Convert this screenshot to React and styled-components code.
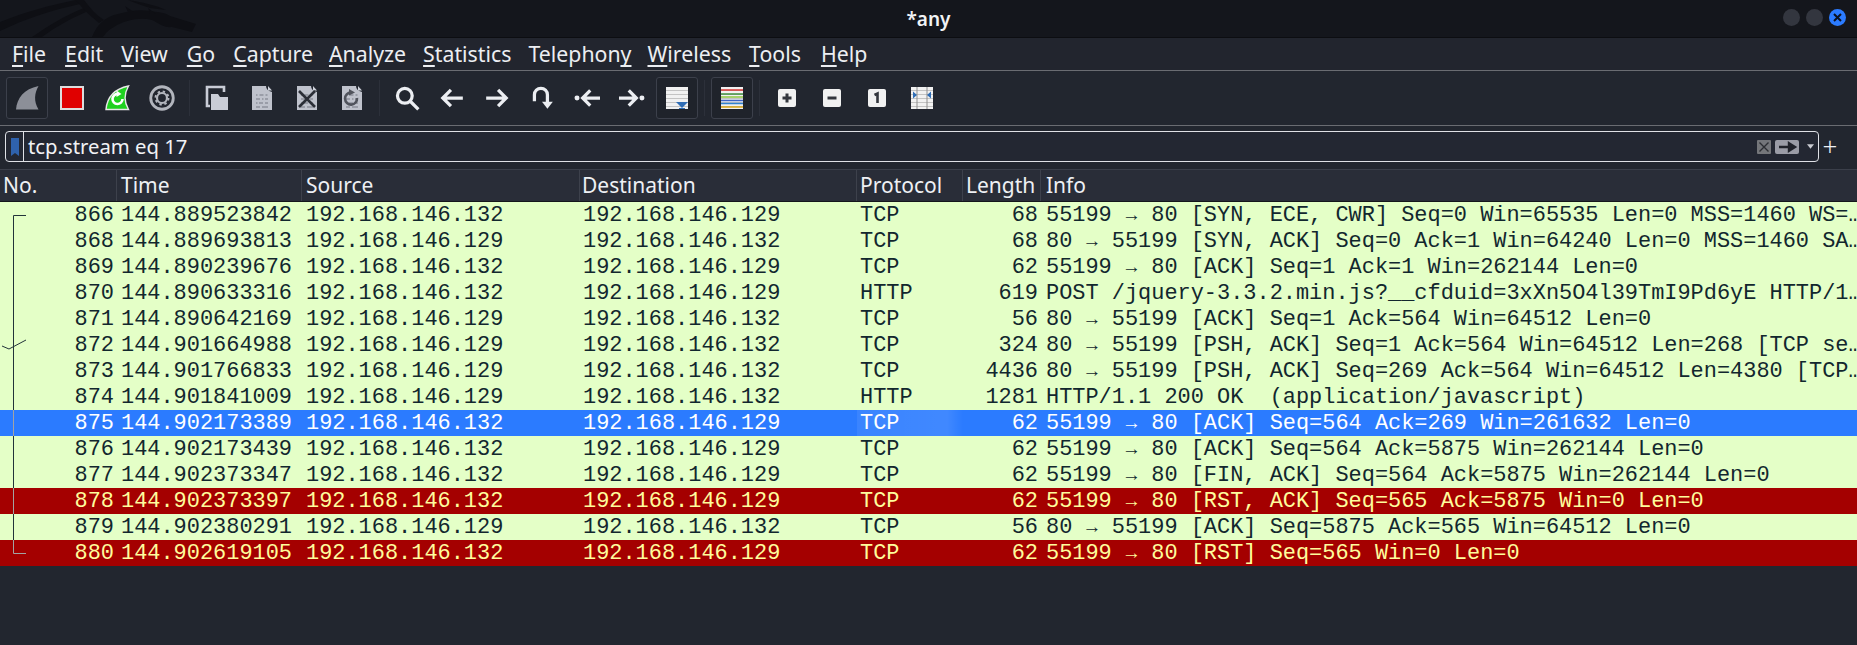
import React from "react";
import styled, { createGlobalStyle } from "styled-components";

const GlobalStyle = createGlobalStyle`
  html, body { margin: 0; padding: 0; background: #22262f; overflow: hidden; }
  #root { width: 1857px; height: 645px; }
`;

const COLUMNS = "117px 185px 278px 277px 106px 78px 1fr";
const UI_FONT = `"Noto Sans", "DejaVu Sans", sans-serif`;

const Window = styled.div`
  width: 1857px;
  height: 645px;
  display: flex;
  flex-direction: column;
  background: #22262f;
  color: #eef0f4;
  font-family: ${UI_FONT};
  overflow: hidden;
`;

const TitleBar = styled.header`
  position: relative;
  flex: 0 0 38px;
  box-sizing: border-box;
  height: 38px;
  display: flex;
  align-items: center;
  justify-content: center;
  background: #14161c;
  border-bottom: 1px solid #0c0d11;
`;

const Dragon = styled.svg`
  position: absolute;
  left: 0;
  top: 0;
  width: 220px;
  height: 37px;
`;

const Title = styled.div`
  font-size: 19px;
  font-weight: 600;
  color: #f2f3f5;
  line-height: 36px;
`;

const WindowButtons = styled.div`
  position: absolute;
  right: 11px;
  top: 9px;
  display: flex;
  gap: 6px;
`;

const WindowDot = styled.span`
  width: 17px;
  height: 17px;
  border-radius: 50%;
  background: ${(p) => (p.$close ? "#2b7bff" : "#33363f")};
  display: flex;
  align-items: center;
  justify-content: center;
`;

const MenuBar = styled.nav`
  flex: 0 0 33px;
  height: 33px;
  box-sizing: border-box;
  display: flex;
  align-items: center;
  padding-left: 12px;
  background: #22252e;
  border-bottom: 1px solid #6a6c72;
`;

const MenuItem = styled.span`
  font-size: 21.3px;
  line-height: 32px;
  color: #eceef2;
  margin-right: ${(p) => p.$gap}px;
  white-space: nowrap;
  & u {
    text-decoration-thickness: 2px;
    text-underline-offset: 3px;
    text-decoration-skip-ink: none;
  }
`;

const ToolBar = styled.div`
  flex: 0 0 55px;
  height: 55px;
  box-sizing: border-box;
  display: flex;
  align-items: center;
  gap: 3px;
  padding-left: 6px;
  background: #22262f;
  border-bottom: 1px solid #6a6c72;
`;

const ToolButton = styled.div`
  box-sizing: border-box;
  width: 42px;
  height: 42px;
  display: flex;
  align-items: center;
  justify-content: center;
  border-radius: 3px;
  border: 1px solid ${(p) => (p.$on ? "#3c404b" : "transparent")};
  background: ${(p) => (p.$on ? "#1f232b" : "transparent")};
`;

const ToolSep = styled.span`
  width: 1px;
  height: 36px;
  margin: 0 3px;
  background: #2c303a;
`;

const FilterRow = styled.div`
  flex: 0 0 43px;
  height: 43px;
  box-sizing: border-box;
  display: flex;
  align-items: flex-start;
  padding: 5px 0 0 5px;
  background: #22262f;
`;

const FilterField = styled.div`
  box-sizing: border-box;
  width: 1814px;
  height: 31px;
  display: flex;
  align-items: center;
  border: 1px solid #dfe1e6;
  border-radius: 4px;
  background: #232732;
`;

const BookmarkCell = styled.div`
  box-sizing: border-box;
  flex: 0 0 18px;
  height: 100%;
  display: flex;
  align-items: center;
  justify-content: center;
  border-right: 1px solid #dfe1e6;
`;

const FilterText = styled.div`
  flex: 1;
  padding-left: 4px;
  font-size: 20.3px;
  line-height: 29px;
  color: #f1f2f5;
`;

const FilterActions = styled.div`
  display: flex;
  align-items: center;
  gap: 4px;
  padding-right: 4px;
`;

const DropArrow = styled.svg`
  margin-left: 4px;
`;

const AddFilter = styled.div`
  font-size: 26px;
  font-weight: 300;
  line-height: 30px;
  width: 24px;
  margin-left: -1px;
  text-align: center;
  color: #eef0f4;
`;

const TableHeader = styled.div`
  flex: 0 0 33px;
  height: 33px;
  box-sizing: border-box;
  display: grid;
  grid-template-columns: ${COLUMNS};
  background: #292d38;
  border-top: 1px solid #3b3f4a;
  border-bottom: 1px solid #14161b;
`;

const HeaderCell = styled.div`
  box-sizing: border-box;
  padding-left: ${(p) => p.$pad}px;
  font-size: 21px;
  line-height: 31px;
  color: #eef0f4;
  border-right: 1px solid #3d414c;
  white-space: nowrap;
  overflow: hidden;
  &:last-child { border-right: 0; }
`;

const PacketList = styled.div`
  display: flex;
  flex-direction: column;
`;

const ROW_COLOURS = {
  normal: { bg: "#e4ffc7", fg: "#12272e" },
  selected: { bg: "#2b7bff", fg: "#ffffff" },
  reset: { bg: "#a40000", fg: "#fffc9c" },
};

const Row = styled.div`
  height: 26px;
  display: grid;
  grid-template-columns: ${COLUMNS};
  background: ${(p) => ROW_COLOURS[p.$kind].bg};
  color: ${(p) => ROW_COLOURS[p.$kind].fg};
  font-family: "Liberation Mono", "DejaVu Sans Mono", monospace;
  font-size: 21.93px;
  line-height: 26px;
  white-space: pre;
`;

const Cell = styled.div`
  position: relative;
  overflow: hidden;
  box-sizing: border-box;
  height: 26px;
  text-align: ${(p) => (p.$right ? "right" : "left")};
  padding: ${(p) => (p.$right ? "1px 3px 0 0" : `1px 0 0 ${p.$pad || 4}px`)};
`;

const ProtocolCell = styled(Cell)`
  background: ${(p) =>
    p.$glow ? "linear-gradient(90deg, rgba(255,255,255,0.07), rgba(255,255,255,0.1) 85%, rgba(255,255,255,0))" : "none"};
`;

const InfoArrow = styled.span`
  display: inline-block;
  width: 13.16px;
  text-align: center;
  overflow: visible;
  font-size: 19px;
  line-height: 20px;
`;

const TreeMark = styled.svg`
  position: absolute;
  left: 0;
  top: 0;
  width: 30px;
  height: 26px;
`;

const Tree = ({ type, kind }) => {
  const c = kind === "normal" ? "#22343a" : "#a3a3a3";
  return (
    <TreeMark viewBox="0 0 30 26" fill="none" strokeWidth="1">
      {type === "first" && <path d="M13.5 26V13.5H26" stroke={c} />}
      {type === "mid" && <path d="M13.5 0V26" stroke={c} />}
      {type === "ack" && (
        <>
          <path d="M13.5 0V26" stroke={c} />
          <path d="M2 14l7 3L26 8" stroke={c} />
        </>
      )}
      {type === "last" && <path d="M13.5 0V13.5H26" stroke={c} />}
    </TreeMark>
  );
};

const Fin = ({ fill, children, stroke }) => (
  <svg width="26" height="28" viewBox="0 0 26 28">
    <path d="M2 25.5C3 14 10 5 24.5 2C20.5 9 19.5 17 24.5 25.5Z" fill={fill} stroke={stroke} strokeWidth={stroke ? 1.4 : 0} />
    {children}
  </svg>
);

const DocIcon = ({ children }) => (
  <svg width="22" height="26" viewBox="0 0 22 26">
    <path d="M1 1H15C15 4 17 6 21 7V25H1Z" fill="#bfc2cc" />
    <path d="M17 1L21 5.5H17Z" fill="#d0d3dc" />
    <path d="M5 10h1.5M8.5 10h4M14.5 10h2M5 14h4M11 14h1.5M14 14h3M5 18h1.5M8 18h4M14 18h3M5 22h4M11 22h6" stroke="#9a9da8" strokeWidth="2" />
    {children}
  </svg>
);

const Glyph = ({ children, size = 26, w = 3, color = "#eceef2" }) => (
  <svg width={size} height={size} viewBox="0 0 24 24" fill="none" stroke={color} strokeWidth={w} strokeLinejoin="miter">
    {children}
  </svg>
);

const WhiteKey = ({ children }) => (
  <svg width="18" height="18" viewBox="0 0 18 18">
    <rect width="18" height="18" rx="2" fill="#f1f1f1" />
    {children}
  </svg>
);

const Stripes = ({ children }) => (
  <svg width="22" height="22" viewBox="0 0 22 22">
    <rect width="22" height="22" fill="#f1f1f1" />
    <path d="M0 3.5H22M0 7.5H22M0 11.5H22M0 15.5H22M0 19.5H22" stroke="#c3c3c3" strokeWidth="1" />
    {children}
  </svg>
);

const groups = [
  [
    <ToolButton $on key="a"><Fin fill="#8c8f98" /></ToolButton>,
    <ToolButton key="b">
      <svg width="24" height="24" viewBox="0 0 24 24"><rect x="1" y="1" width="22" height="22" fill="#e00000" stroke="#ddd" strokeWidth="2" /></svg>
    </ToolButton>,
    <ToolButton key="c">
      <Fin fill="#1fd11f" stroke="#e8e8e8">
        <path d="M18.5 15a5 5 0 1 1-4.5-5" fill="none" stroke="#fff" strokeWidth="2.6" />
        <path d="M12.5 6.5l5 3.5-5 3z" fill="#fff" />
      </Fin>
    </ToolButton>,
    <ToolButton key="d">
      <Glyph color="#b2b5bd" w={2.6}>
        <circle cx="12" cy="12" r="10.4" />
        <circle cx="12" cy="12" r="4.6" strokeWidth="2" />
        <circle cx="12" cy="12" r="6" strokeWidth="1.8" strokeDasharray="2.2 2.5" />
      </Glyph>
    </ToolButton>,
  ],
  [
    <ToolButton key="e">
      <svg width="24" height="26" viewBox="0 0 24 26">
        <path d="M5 21H2V2H19V7" fill="none" stroke="#c9ccd6" strokeWidth="2.6" />
        <path d="M6 9h7l2 3h8v13H6z" fill="#c9ccd6" />
      </svg>
    </ToolButton>,
    <ToolButton key="f"><DocIcon /></ToolButton>,
    <ToolButton key="g">
      <DocIcon><path d="M3 6L19 22M19 6L3 22" stroke="#2b2e37" strokeWidth="2.6" /></DocIcon>
    </ToolButton>,
    <ToolButton key="h">
      <DocIcon>
        <path d="M16 13a6 6 0 1 1-6-5.4" fill="none" stroke="#50535c" strokeWidth="2.6" />
        <path d="M8 4l6 3.5-6 3z" fill="#50535c" />
      </DocIcon>
    </ToolButton>,
  ],
  [
    <ToolButton key="i">
      <Glyph w={3}><circle cx="10" cy="10" r="6.8" /><path d="M15 15l7.5 7.5" /></Glyph>
    </ToolButton>,
    <ToolButton key="j"><Glyph><path d="M22 12H4M11 4.5L3.5 12L11 19.5" /></Glyph></ToolButton>,
    <ToolButton key="k"><Glyph><path d="M2 12H20M13 4.5L20.5 12L13 19.5" /></Glyph></ToolButton>,
    <ToolButton key="l">
      <Glyph><path d="M5 15V9a6 6 0 0 1 12 0v9" /><path d="M12 15.5h10L17 22z" fill="#eceef2" stroke="none" /></Glyph>
    </ToolButton>,
    <ToolButton key="m">
      <Glyph><circle cx="2.8" cy="12" r="2.3" fill="#eceef2" stroke="none" /><path d="M24 12H8M15 5L8 12L15 19" /></Glyph>
    </ToolButton>,
    <ToolButton key="n">
      <Glyph><circle cx="21.2" cy="12" r="2.3" fill="#eceef2" stroke="none" /><path d="M0 12H16M9 5L16 12L9 19" /></Glyph>
    </ToolButton>,
    <ToolButton $on key="o">
      <Stripes><path d="M10 15h12l-6 6z" fill="#2f6db5" /><path d="M13 21h6v1h-6z" fill="#2f6db5" /></Stripes>
    </ToolButton>,
  ],
  [
    <ToolButton $on key="p">
      <Stripes>
        <path d="M0 3H22" stroke="#d7322f" strokeWidth="1.5" />
        <path d="M0 7H22" stroke="#3f8f3f" strokeWidth="1.5" />
        <path d="M0 10H22" stroke="#8cc63f" strokeWidth="1.5" />
        <path d="M0 13.5H22" stroke="#3d63c7" strokeWidth="1.5" />
        <path d="M0 16.5H22" stroke="#2f82d0" strokeWidth="1.5" />
        <path d="M0 20H22" stroke="#d9a514" strokeWidth="1.5" />
      </Stripes>
    </ToolButton>,
  ],
  [
    <ToolButton key="q"><WhiteKey><path d="M9 4.5v9M4.5 9h9" stroke="#33363d" strokeWidth="3" /></WhiteKey></ToolButton>,
    <ToolButton key="r"><WhiteKey><path d="M4.5 9h9" stroke="#33363d" strokeWidth="3" /></WhiteKey></ToolButton>,
    <ToolButton key="s"><WhiteKey><path d="M6.5 6L9.5 4.5V14" fill="none" stroke="#33363d" strokeWidth="2.6" /></WhiteKey></ToolButton>,
    <ToolButton key="t">
      <Stripes>
        <path d="M6 0V22M16 0V22" stroke="#8f8f8f" strokeWidth="1" />
        <path d="M2 4.5L6 8L2 11.5ZM20 4.5L16 8L20 11.5Z" fill="#2f6db5" />
      </Stripes>
    </ToolButton>,
  ],
];

const menus = [
  [<><u>F</u>ile</>, 19],
  [<><u>E</u>dit</>, 18],
  [<><u>V</u>iew</>, 19],
  [<><u>G</u>o</>, 18],
  [<><u>C</u>apture</>, 16],
  [<><u>A</u>nalyze</>, 17],
  [<><u>S</u>tatistics</>, 17],
  [<>Telephon<u>y</u></>, 16],
  [<><u>W</u>ireless</>, 18],
  [<><u>T</u>ools</>, 20],
  [<><u>H</u>elp</>, 0],
];

const A = "192.168.146.132";
const B = "192.168.146.129";
const packets = [
  ["866", "144.889523842", A, B, "TCP", "68", "55199 → 80 [SYN, ECE, CWR] Seq=0 Win=65535 Len=0 MSS=1460 WS=…", "normal", "first"],
  ["868", "144.889693813", B, A, "TCP", "68", "80 → 55199 [SYN, ACK] Seq=0 Ack=1 Win=64240 Len=0 MSS=1460 SA…", "normal", "mid"],
  ["869", "144.890239676", A, B, "TCP", "62", "55199 → 80 [ACK] Seq=1 Ack=1 Win=262144 Len=0", "normal", "mid"],
  ["870", "144.890633316", A, B, "HTTP", "619", "POST /jquery-3.3.2.min.js?__cfduid=3xXn5O4l39TmI9Pd6yE HTTP/1…", "normal", "mid"],
  ["871", "144.890642169", B, A, "TCP", "56", "80 → 55199 [ACK] Seq=1 Ack=564 Win=64512 Len=0", "normal", "mid"],
  ["872", "144.901664988", B, A, "TCP", "324", "80 → 55199 [PSH, ACK] Seq=1 Ack=564 Win=64512 Len=268 [TCP se…", "normal", "ack"],
  ["873", "144.901766833", B, A, "TCP", "4436", "80 → 55199 [PSH, ACK] Seq=269 Ack=564 Win=64512 Len=4380 [TCP…", "normal", "mid"],
  ["874", "144.901841009", B, A, "HTTP", "1281", "HTTP/1.1 200 OK  (application/javascript)", "normal", "mid"],
  ["875", "144.902173389", A, B, "TCP", "62", "55199 → 80 [ACK] Seq=564 Ack=269 Win=261632 Len=0", "selected", "mid"],
  ["876", "144.902173439", A, B, "TCP", "62", "55199 → 80 [ACK] Seq=564 Ack=5875 Win=262144 Len=0", "normal", "mid"],
  ["877", "144.902373347", A, B, "TCP", "62", "55199 → 80 [FIN, ACK] Seq=564 Ack=5875 Win=262144 Len=0", "normal", "mid"],
  ["878", "144.902373397", A, B, "TCP", "62", "55199 → 80 [RST, ACK] Seq=565 Ack=5875 Win=0 Len=0", "reset", "mid"],
  ["879", "144.902380291", B, A, "TCP", "56", "80 → 55199 [ACK] Seq=5875 Ack=565 Win=64512 Len=0", "normal", "mid"],
  ["880", "144.902619105", A, B, "TCP", "62", "55199 → 80 [RST] Seq=565 Win=0 Len=0", "reset", "last"],
];

const headers = [
  ["No.", 3],
  ["Time", 4],
  ["Source", 4],
  ["Destination", 2],
  ["Protocol", 3],
  ["Length", 3],
  ["Info", 5],
];

const InfoText = ({ text }) => {
  const [before, after] = text.includes(" → ") ? text.split("→") : [text, null];
  return after === null ? text : (<>{before}<InfoArrow>→</InfoArrow>{after}</>);
};

export default function App() {
  return (
    <Window>
      <GlobalStyle />
      <TitleBar>
        <Dragon viewBox="0 0 220 37" fill="#0e0f14">
          <path d="M92 37C97 25 104 17 118 14C130 11 138 9 150 11C156 12 165 12 170 16L196 24L192 32L172 27C164 28 160 24 152 20C140 17 125 20 114 27C108 30 106 33 103 37Z" />
          <path d="M0 22C25 12 50 5 76 0L80 4C52 10 25 19 0 31Z" />
          <path d="M32 37C48 26 66 15 84 8L86 12C70 19 54 28 42 37Z" />
          <path d="M76 0H84C90 8 96 15 104 20L99 23C90 16 82 8 76 0Z" />
          <path d="M128 0C142 2 155 5 166 10L150 8C142 5 134 3 128 0Z" />
          <path d="M125 6L134 12H128ZM148 8L156 14H150Z" />
        </Dragon>
        <Title>*any</Title>
        <WindowButtons>
          <WindowDot />
          <WindowDot />
          <WindowDot $close>
            <svg width="9" height="9" viewBox="0 0 9 9"><path d="M1 1L8 8M8 1L1 8" stroke="#0b1220" strokeWidth="2" /></svg>
          </WindowDot>
        </WindowButtons>
      </TitleBar>

      <MenuBar>
        {menus.map(([label, gap], i) => (
          <MenuItem key={i} $gap={gap}>{label}</MenuItem>
        ))}
      </MenuBar>

      <ToolBar>
        {groups.map((g, i) => (
          <React.Fragment key={i}>
            {i > 0 && <ToolSep />}
            {g}
          </React.Fragment>
        ))}
      </ToolBar>

      <FilterRow>
        <FilterField>
          <BookmarkCell>
            <svg width="10" height="20" viewBox="0 0 10 20"><path d="M1 1H9V19L5 16L1 19Z" fill="#2f62ad" /></svg>
          </BookmarkCell>
          <FilterText>tcp.stream eq 17</FilterText>
          <FilterActions>
            <svg width="14" height="14" viewBox="0 0 14 14">
              <rect width="14" height="14" rx="1" fill="#74767a" />
              <path d="M2.5 2.5L11.5 11.5M11.5 2.5L2.5 11.5" stroke="#2c2e33" strokeWidth="1.4" />
            </svg>
            <svg width="24" height="14" viewBox="0 0 24 14">
              <rect width="24" height="14" rx="2" fill="#9a9ca6" />
              <path d="M4 7H16M14 3.2L20 7L14 10.8Z" stroke="#20232b" strokeWidth="2.4" fill="#20232b" />
            </svg>
            <DropArrow width="7" height="5" viewBox="0 0 8 5"><path d="M0 0H8L4 5Z" fill="#c9cbd1" /></DropArrow>
          </FilterActions>
        </FilterField>
        <AddFilter>+</AddFilter>
      </FilterRow>

      <TableHeader>
        {headers.map(([h, pad]) => (
          <HeaderCell key={h} $pad={pad}>{h}</HeaderCell>
        ))}
      </TableHeader>

      <PacketList>
        {packets.map(([no, time, src, dst, proto, len, info, kind, tree]) => (
          <Row key={no} $kind={kind}>
            <Cell $right>
              <Tree type={tree} kind={kind} />
              {no}
            </Cell>
            <Cell>{time}</Cell>
            <Cell>{src}</Cell>
            <Cell $pad={3}>{dst}</Cell>
            <ProtocolCell $pad={3} $glow={kind === "selected"}>{proto}</ProtocolCell>
            <Cell $right>{len}</Cell>
            <Cell $pad={5}><InfoText text={info} /></Cell>
          </Row>
        ))}
      </PacketList>
    </Window>
  );
}
